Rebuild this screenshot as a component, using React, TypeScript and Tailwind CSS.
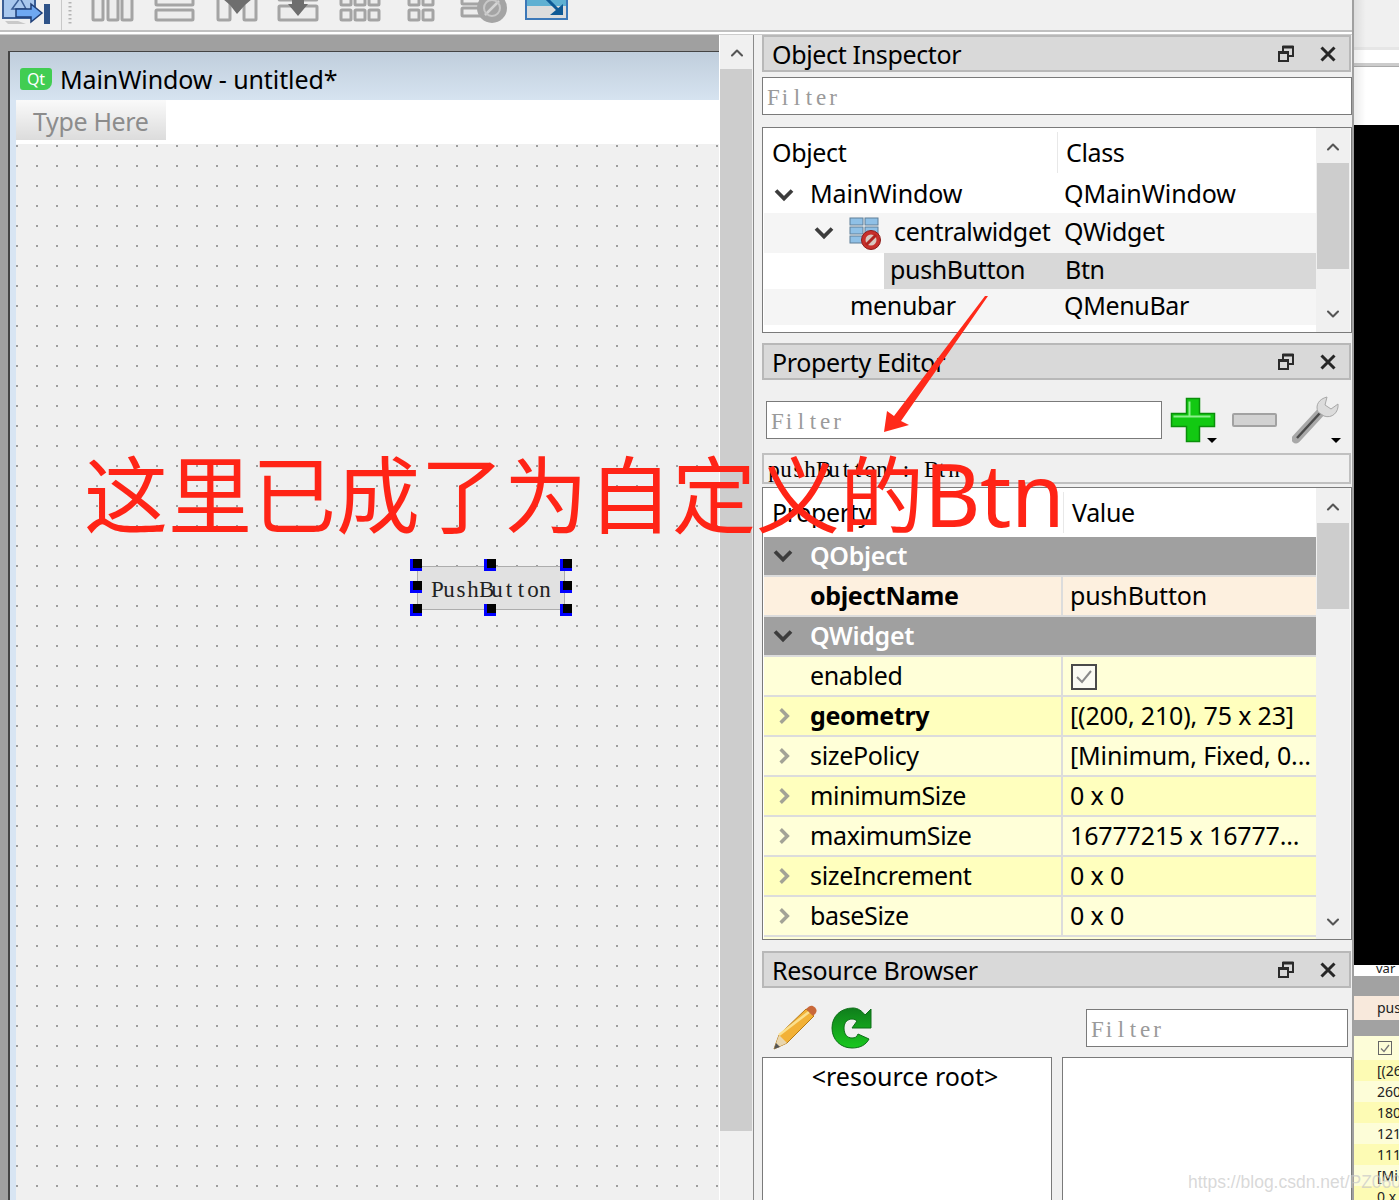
import { ChevronDown, ChevronUp } from "lucide-react";
import type { ReactNode } from "react";

const propertyRows = [
  { name: "enabled", value: "", bg: "bg-[#ffffd8]", check: true },
  { name: "geometry", value: "[(200, 210), 75 x 23]", bg: "bg-[#ffffbe]", bold: true, more: true },
  { name: "sizePolicy", value: "[Minimum, Fixed, 0...", bg: "bg-[#ffffd8]", more: true },
  { name: "minimumSize", value: "0 x 0", bg: "bg-[#ffffbe]", more: true },
  { name: "maximumSize", value: "16777215 x 16777...", bg: "bg-[#ffffd8]", more: true },
  { name: "sizeIncrement", value: "0 x 0", bg: "bg-[#ffffbe]", more: true },
  { name: "baseSize", value: "0 x 0", bg: "bg-[#ffffd8]", more: true },
];

const miniRows = [
  { text: "[(26", bg: "bg-[#fdfbb4]" },
  { text: "260", bg: "bg-[#fdfdd8]" },
  { text: "180", bg: "bg-[#fdfbb4]" },
  { text: "121", bg: "bg-[#fdfdd8]" },
  { text: "111", bg: "bg-[#fdfbb4]" },
  { text: "[Mi", bg: "bg-[#fdfdd8]" },
  { text: "0 x", bg: "bg-[#fdfbb4]" },
];

const handles = [
  "left-0 top-0",
  "left-[74px] top-0",
  "left-[150px] top-0",
  "left-0 top-[22px]",
  "left-[150px] top-[22px]",
  "left-0 top-[45px]",
  "left-[74px] top-[45px]",
  "left-[150px] top-[45px]",
];

// fixed 12px cells, the reference font is a bitmap serif with half width letters
const Fixed = ({ text }: { text: string }) => (
  <span className="whitespace-pre font-['Liberation_Serif',serif] tracking-normal">
    {[...text].map((ch, i) => (
      <span key={i} className="inline-block w-[12px] text-center">
        {ch}
      </span>
    ))}
  </span>
);

const FloatIcon = () => (
  <svg width="16" height="18" viewBox="0 0 16 18" fill="none" stroke="#2b2b2b" strokeWidth="2">
    <rect x="5" y="2" width="10" height="9" />
    <rect x="5" y="1" width="10" height="2" fill="#2b2b2b" strokeWidth="1" />
    <rect x="1" y="7" width="9" height="9" fill="#d9d9d9" />
    <rect x="1" y="6.5" width="9" height="2" fill="#2b2b2b" strokeWidth="1" />
  </svg>
);

const CloseIcon = () => (
  <svg width="16" height="16" viewBox="0 0 16 16" stroke="#262626" strokeWidth="3">
    <path d="M1.5 1.5 14.5 14.5M14.5 1.5 1.5 14.5" />
  </svg>
);

const TreeChevron = () => (
  <svg width="24" height="24" viewBox="0 0 24 24" fill="none" stroke="#3c3c3c" strokeWidth="3.8">
    <path d="M4 7.5l8 8 8-8" />
  </svg>
);

const MoreChevron = () => (
  <svg width="24" height="24" viewBox="0 0 24 24" fill="none" stroke="#a3a396" strokeWidth="4.2">
    <path d="M8 4l8 8-8 8" />
  </svg>
);

const DockTitle = ({ title }: { title: string }) => (
  <div className="flex h-[37px] w-[589px] shrink-0 items-center border-2 border-[#b8b8b8] bg-[#d9d9d9] pl-[8px] pr-[13px]">
    <span className="flex-1 pt-[2px] text-[25px] leading-none">{title}</span>
    <FloatIcon />
    <span className="ml-[26px] flex">
      <CloseIcon />
    </span>
  </div>
);

const FilterInput = ({ className }: { className: string }) => (
  <div
    className={`flex h-[38px] shrink-0 items-center border border-[#7a7a7a] bg-white pl-[4px] pt-[2px] text-[23px] text-[#9a9a9a] ${className}`}
  >
    <Fixed text="Filter" />
  </div>
);

const ScrollBar = ({ thumbTop, thumbHeight, bottomGap }: { thumbTop: number; thumbHeight: number; bottomGap: string }) => (
  <div className="flex h-full w-[34px] shrink-0 flex-col items-center bg-[#f0f0f0]">
    <div style={{ height: thumbTop }} className="flex w-full shrink-0 items-center justify-center pt-[3px]">
      <ChevronUp size={20} strokeWidth={2.5} color="#555" />
    </div>
    <div style={{ height: thumbHeight }} className="w-[32px] shrink-0 bg-[#cdcdcd]" />
    <div className={`flex w-full flex-1 items-end justify-center ${bottomGap}`}>
      <ChevronDown size={20} strokeWidth={2.5} color="#555" />
    </div>
  </div>
);

const TreeRow = ({
  object,
  klass,
  className,
  wide,
}: {
  object: ReactNode;
  klass: string;
  className: string;
  wide?: boolean;
}) => (
  <div className={`flex w-[552px] items-center ${className}`}>
    <div className="flex h-full w-[300px] items-center pb-[3px]">{object}</div>
    <span className={`pb-[3px] ${wide ? "tracking-[-0.1px]" : ""}`}>{klass}</span>
  </div>
);

const GroupRow = ({ title }: { title: string }) => (
  <div className="flex h-[38px] w-[552px] items-center bg-[#a0a0a0] pl-[7px] font-semibold text-white">
    <TreeChevron />
    <span className="ml-[15px] pb-[2px]">{title}</span>
  </div>
);

const PropertyRow = ({
  name,
  value,
  bg,
  bold,
  more,
  check,
}: {
  name: string;
  value: string;
  bg: string;
  bold?: boolean;
  more?: boolean;
  check?: boolean;
}) => (
  <div className={`flex h-[40px] w-[552px] shrink-0 border-b-[2px] border-[#dcdcdc] ${bg}`}>
    <div className="flex w-[299px] items-center border-r-[2px] border-[#dcdcdc] pl-[10px]">
      <span className="flex w-[20px] justify-center">{more && <MoreChevron />}</span>
      <span className={`ml-[16px] pb-[1px] ${bold ? "font-bold" : ""}`}>{name}</span>
    </div>
    <div className="flex items-center pl-[7px] tracking-[-0.15px]">
      {check ? (
        <span className="ml-[1px] mt-[2px] flex h-[26px] w-[26px] items-center justify-center border-2 border-[#4a4a4a] bg-[#fbfbf3]">
          <svg width="18" height="16" viewBox="0 0 18 16" fill="none" stroke="#8a8a8a" strokeWidth="2">
            <path d="M2 8 7 13 16 2" />
          </svg>
        </span>
      ) : (
        <span className="pb-[1px]">{value}</span>
      )}
    </div>
  </div>
);

const CentralWidgetIcon = () => (
  <svg width="34" height="34" viewBox="0 0 34 34">
    {[2, 11, 20].map((y) => (
      <g key={y}>
        <rect x="1" y={y} width="13" height="7" fill="#8fc0e6" stroke="#5f7f98" />
        <rect x="16" y={y} width="13" height="7" fill="#8fc0e6" stroke="#5f7f98" />
      </g>
    ))}
    <circle cx="22" cy="24" r="9.5" fill="#c8302c" stroke="#8c1d1a" />
    <circle cx="22" cy="24" r="5.5" fill="#d8c8c0" />
    <path d="M17 29 27 19" stroke="#b02420" strokeWidth="3" />
  </svg>
);

const PlusIcon = () => (
  <svg width="46" height="46" viewBox="0 0 46 46">
    <path
      d="M16.5 1.5h13v15h15v13h-15v15h-13v-15h-15v-13h15z"
      fill="#12c912"
      stroke="#0a8f0a"
      strokeWidth="1.5"
    />
    <path d="M19.5 4.5v14.5M3.5 19.5h37" fill="none" stroke="#8cf08c" strokeWidth="2" />
  </svg>
);

const MinusIcon = () => (
  <svg width="46" height="16" viewBox="0 0 46 16">
    <rect x="1" y="2" width="43" height="12" rx="1" fill="#d2d2d2" stroke="#a2a2a2" strokeWidth="2" />
  </svg>
);

const WrenchIcon = () => (
  <svg width="48" height="50" viewBox="0 0 48 50" fill="none">
    <path d="M4 44 28 18" stroke="#a8a8a8" strokeWidth="9" strokeLinecap="round" />
    <path d="M5 43 28 18" stroke="#4a4a4a" strokeWidth="2.5" />
    <path d="M26 17c-3-7 1-13 9-15l-2 8 6 4 7-5c1 8-6 15-14 12z" fill="#dcdcdc" stroke="#a8a8a8" />
  </svg>
);

const DropMark = () => <span className="h-0 w-0 border-x-[5px] border-t-[5px] border-x-transparent border-t-black" />;

const PencilIcon = () => (
  <svg width="46" height="46" viewBox="0 0 46 46">
    <path d="M2 44 7 30 34 4 42 11 15 38z" fill="#f2b136" stroke="#b57a16" />
    <path d="M7 30 37 7" stroke="#fbe08d" strokeWidth="2.5" />
    <path d="M34 4 37 1.5c2-1.5 4-1 6 1s2 4 .5 6L41 11z" fill="#c9683a" />
    <path d="M2 44 7 30 15 38z" fill="#e9d6ae" />
    <path d="M2 44 4 38 8 42z" fill="#555" />
  </svg>
);

const ReloadIcon = () => (
  <svg width="42" height="42" viewBox="0 0 42 42">
    <defs>
      <linearGradient id="reloadFill" x1="0" x2="0" y1="0" y2="1">
        <stop offset="0" stopColor="#0f7d1c" />
        <stop offset="1" stopColor="#19c81e" />
      </linearGradient>
    </defs>
    <path
      d="M22 1C10 1 1 9 1 21s9 20 20 20c8 0 14-3 17-9l-11-5c-1 3-3 4-6 4-5 0-8-4-8-10s4-9 8-9c2 0 4 1 5 2l-5 7h19V2l-6 6c-3-4-7-7-12-7z"
      fill="url(#reloadFill)"
      stroke="#0d6f17"
    />
  </svg>
);

const ToolbarIcons = () => (
  <div className="flex h-[30px] items-start overflow-hidden">
    <svg className="blur-[0.5px]" width="1352" height="30" viewBox="0 0 1352 30">
      {/* tab order */}
      <path d="M3 -2h32v20H3z" fill="#a9c8ee" stroke="#3c5f96" strokeWidth="2" />
      <path d="M12 9 20 -2l6 11z" fill="none" stroke="#3c5f96" strokeWidth="1.5" />
      <path d="M16 9h15V4l11 9-11 9v-5H16z" fill="#6ea8f2" stroke="#1f3f78" strokeWidth="1.5" />
      <rect x="44" y="4" width="6" height="20" fill="#2f5388" />
      <path d="M5 21h13l8 3H8z" fill="#c9c9c9" />
      <path d="M61.5 0v30" stroke="#c8c8c8" />
      <path d="M70 2v22" stroke="#b4b4b4" strokeWidth="3" strokeDasharray="1.5 2.5" />

      <g fill="#ededed" stroke="#a4a4a4" strokeWidth="3">
        {/* layout columns */}
        <rect x="93" y="-6" width="10" height="26" rx="1" />
        <rect x="108" y="-6" width="10" height="26" rx="1" />
        <rect x="122" y="-6" width="10" height="26" rx="1" />
        {/* layout rows */}
        <rect x="156" y="-6" width="37" height="11" rx="1" />
        <rect x="156" y="10" width="37" height="10" rx="1" />
        {/* splitter horizontal */}
        <rect x="218" y="-6" width="12" height="26" rx="1" />
        <rect x="244" y="-6" width="12" height="26" rx="1" />
        {/* splitter vertical */}
        <rect x="279" y="6" width="38" height="14" rx="1" />
        <rect x="279" y="-14" width="38" height="14" rx="1" />
        {/* grid */}
        {[341, 355, 369].map((x) => (
          <g key={x}>
            <rect x={x} y="-3" width="10" height="8" rx="1" />
            <rect x={x} y="10" width="10" height="10" rx="1" />
          </g>
        ))}
        {/* form */}
        {[409, 423].map((x) => (
          <g key={x}>
            <rect x={x} y="-3" width="10" height="8" rx="1" />
            <rect x={x} y="10" width="10" height="10" rx="1" />
          </g>
        ))}
        {/* break layout */}
        <rect x="462" y="-4" width="26" height="8" rx="1" />
        <rect x="462" y="8" width="26" height="8" rx="1" />
      </g>
      <path d="M223 -1h29l-7 6-8 9-7-9z" fill="#6e6e6e" />
      <path d="M292 -2h12v6h4l-10 12-10-12h4z" fill="#6e6e6e" />
      <circle cx="492" cy="8" r="15" fill="#a4a4a4" />
      <path d="M485 15 499 1" stroke="#d4d4d4" strokeWidth="2.5" />
      <circle cx="492" cy="8" r="8" fill="none" stroke="#c8c8c8" strokeWidth="2" />
      {/* adjust size */}
      <rect x="526" y="-4" width="41" height="23" fill="#dcdcdc" stroke="#3c78b8" strokeWidth="2" />
      <rect x="527" y="-3" width="39" height="9" fill="#5fb0d2" />
      <path d="M546 -2 560 12" stroke="#0f5a96" strokeWidth="3" />
      <path d="M550 15h13V4z" fill="#0f5a96" />
    </svg>
  </div>
);

const FormCanvas = () => (
  <div className="relative flex-1 bg-[#f0f0f0] bg-[conic-gradient(at_2px_2px,transparent_270deg,#9e9e9e_270deg)] bg-[size:20px_20px] bg-[position:0_1px]">
    {/* widget on the form, placed freely */}
    <div className="absolute left-[394px] top-[415px] h-[57px] w-[162px]">
      <div className="absolute left-[7px] top-[7px] flex h-[44px] w-[148px] items-center justify-center border border-[#adadad] bg-[#e1e1e1] pt-[2px] text-[23px] text-[#222]">
        <Fixed text="PushButton" />
      </div>
      {handles.map((pos) => (
        <div key={pos} className={`absolute flex h-[12px] w-[12px] justify-end bg-[#0000ff] ${pos}`}>
          <div className="h-[9px] w-[9px] bg-black" />
        </div>
      ))}
    </div>
  </div>
);

const DesignerArea = () => (
  <div className="flex h-[1165px] w-[753px] shrink-0">
    <div className="flex w-[719px] shrink-0 flex-col bg-[#a0a0a0] pl-[8px] pt-[16px]">
      <div className="flex flex-1 flex-col border-l-[2px] border-t-[1px] border-[#444] bg-[#d8e5f3]">
        <div className="flex h-[48px] shrink-0 items-center bg-gradient-to-b from-[#c0cedc] to-[#d6e3f0] pl-[10px] text-[25px] tracking-[-0.1px]">
          <span className="mt-[6px] flex h-[22px] w-[32px] items-center justify-center rounded-[3px] rounded-br-[8px] bg-[#41cd52] text-[16px] text-white">
            Qt
          </span>
          <span className="ml-[8px] pt-[6px] text-black">MainWindow - untitled*</span>
        </div>
        <div className="ml-[6px] flex flex-1 flex-col">
          <div className="flex h-[44px] shrink-0 items-start bg-white">
            <div className="flex h-[40px] w-[150px] items-center bg-gradient-to-b from-[#fafafa] to-[#dcdcdc] pl-[17px] pt-[2px] text-[#8c8c8c]">
              Type Here
            </div>
          </div>
          <FormCanvas />
        </div>
      </div>
    </div>
    <div className="flex w-[34px] shrink-0 flex-col items-center border-l border-white bg-[#f0f0f0]">
      <div className="flex h-[34px] w-full shrink-0 items-center justify-center pt-[2px]">
        <ChevronUp size={20} strokeWidth={2.5} color="#555" />
      </div>
      <div className="h-[1062px] w-[32px] self-start bg-[#cdcdcd]" />
    </div>
  </div>
);

const ObjectInspector = () => (
  <>
    <DockTitle title="Object Inspector" />
    <FilterInput className="mt-[5px] w-[590px]" />
    <div className="mt-[12px] flex h-[206px] w-[590px] shrink-0 border border-[#7a7a7a] bg-white pl-[1px]">
      <div className="flex w-[552px] shrink-0 flex-col">
        <div className="flex h-[49px] shrink-0 items-center">
          <span className="w-[294px] border-r border-[#e8e8e8] py-[8px] pl-[8px]">Object</span>
          <span className="pl-[8px]">Class</span>
        </div>
        <TreeRow
          object={
            <>
              <span className="ml-[8px] flex pt-[3px]">
                <TreeChevron />
              </span>
              <span className="ml-[14px] tracking-[-0.1px]">MainWindow</span>
            </>
          }
          klass="QMainWindow"
          className="h-[36px]"
          wide
        />
        <TreeRow
          object={
            <>
              <span className="ml-[48px] flex pt-[3px]">
                <TreeChevron />
              </span>
              <span className="ml-[13px] flex pt-[3px]">
                <CentralWidgetIcon />
              </span>
              <span className="ml-[11px]">centralwidget</span>
            </>
          }
          klass="QWidget"
          className="h-[40px] bg-[#f5f5f5]"
        />
        <div className="flex h-[36px] w-[552px] items-center">
          <div className="h-full w-[120px] shrink-0" />
          <div className="flex h-full flex-1 items-center bg-[#d8d8d8] pb-[3px] pl-[6px]">
            <span className="w-[175px]">pushButton</span>
            <span>Btn</span>
          </div>
        </div>
        <TreeRow object={<span className="ml-[86px]">menubar</span>} klass="QMenuBar" className="h-[36px] bg-[#f5f5f5]" />
      </div>
      <ScrollBar thumbTop={35} thumbHeight={106} bottomGap="pb-[8px]" />
    </div>
  </>
);

const PropertyEditor = () => (
  <>
    <DockTitle title="Property Editor" />
    <div className="mt-[21px] flex h-[38px] w-[590px] shrink-0 items-center pl-[4px]">
      <FilterInput className="w-[396px]" />
      <div className="ml-[8px] flex w-[46px] flex-col items-center">
        <PlusIcon />
      </div>
      <div className="-ml-[9px] flex h-[46px] w-[10px] items-end">
        <DropMark />
      </div>
      <div className="ml-[15px]">
        <MinusIcon />
      </div>
      <div className="ml-[14px]">
        <WrenchIcon />
      </div>
      <div className="-ml-[9px] flex h-[46px] w-[10px] items-end">
        <DropMark />
      </div>
    </div>
    <div className="mt-[14px] flex h-[31px] w-[589px] shrink-0 items-center border-2 border-[#c0c0c0] pl-[4px] pt-[2px] text-[23px]">
      <Fixed text="pushButton : Btn" />
    </div>
    <div className="mt-[3px] flex h-[453px] w-[590px] shrink-0 border border-[#7a7a7a] bg-white pl-[1px]">
      <div className="flex h-full w-[552px] shrink-0 flex-col overflow-hidden bg-[#ffffd8]">
        <div className="flex h-[49px] shrink-0 items-center bg-white">
          <span className="w-[300px] border-r border-[#e8e8e8] py-[8px] pl-[8px]">Property</span>
          <span className="pl-[8px]">Value</span>
        </div>
        <GroupRow title="QObject" />
        <div className="h-[2px] shrink-0 bg-[#dcdcdc]" />
        <PropertyRow name="objectName" value="pushButton" bg="bg-[#fdf0df]" bold />
        <GroupRow title="QWidget" />
        <div className="h-[2px] shrink-0 bg-[#dcdcdc]" />
        {propertyRows.map((row) => (
          <PropertyRow key={row.name} {...row} />
        ))}
      </div>
      <ScrollBar thumbTop={35} thumbHeight={86} bottomGap="pb-[7px]" />
    </div>
  </>
);

const ResourceBrowser = () => (
  <>
    <DockTitle title="Resource Browser" />
    <div className="mt-[17px] flex h-[46px] w-[590px] shrink-0 items-center pl-[10px]">
      <PencilIcon />
      <span className="ml-[13px] flex">
        <ReloadIcon />
      </span>
      <FilterInput className="ml-[213px] w-[262px]" />
    </div>
    <div className="mt-[6px] flex flex-1 gap-[10px]">
      <div className="flex h-[160px] w-[290px] justify-center border border-[#7a7a7a] bg-white pr-[4px] pt-[6px] tracking-normal">
        &lt;resource root&gt;
      </div>
      <div className="h-[160px] w-[290px] border border-[#7a7a7a] bg-white" />
    </div>
  </>
);

const BackWindow = () => (
  <div className="relative flex h-[1200px] w-[47px] shrink-0 flex-col overflow-hidden border-l-2 border-[#a0a0a0] text-[14px] tracking-normal text-[#222]">
    <div className="h-[47px] shrink-0 bg-[#f0f0f0]" />
    <div className="h-[3px] shrink-0 bg-[#e6e6e6]" />
    <div className="h-[13px] shrink-0 bg-white" />
    <div className="h-[4px] shrink-0 border-b border-[#aaaaaa] bg-[#cccccc]" />
    <div className="h-[58px] shrink-0 bg-white" />
    <div className="h-[840px] shrink-0 bg-black" />
    <div className="h-[11px] shrink-0 bg-white pl-[22px] text-[13px] leading-[6px]">var</div>
    <div className="h-[20px] shrink-0 bg-[#a2a2a2]" />
    <div className="flex h-[24px] shrink-0 items-center bg-[#f8e9dc] pl-[23px]">pus</div>
    <div className="h-[16px] shrink-0 bg-[#a2a2a2]" />
    <div className="flex h-[24px] shrink-0 items-center bg-[#fdfdd8] pl-[24px]">
      <span className="flex h-[14px] w-[14px] items-center justify-center border border-[#666]">
        <svg width="10" height="9" viewBox="0 0 10 9" fill="none" stroke="#777" strokeWidth="1.3">
          <path d="M1 4.5 4 7.5 9 1" />
        </svg>
      </span>
    </div>
    {miniRows.map((row) => (
      <div key={row.text} className={`flex h-[21px] shrink-0 items-center pl-[23px] ${row.bg}`}>
        {row.text}
      </div>
    ))}
    <div className="absolute left-0 top-0 h-[125px] w-[12px] bg-gradient-to-r from-[#00000014] to-transparent" />
  </div>
);

const Annotation = () => (
  <>
    <svg className="pointer-events-none absolute left-[870px] top-[290px]" width="130" height="150" viewBox="870 290 130 150">
      <polygon points="988,296 901,421 909,425 884,432 887,411 894,416 985,296" fill="#ff2a1a" />
    </svg>
    <div className="pointer-events-none absolute left-[84px] top-[436px] whitespace-nowrap font-['Noto_Sans','Noto_Sans_CJK_SC',sans-serif] text-[84px] leading-[114px] tracking-normal text-[#ff2416]">
      这里已成了为自定义的<span className="text-[87px] tracking-[-0.5px]">Btn</span>
    </div>
    <div className="pointer-events-none absolute left-[1188px] top-[1174px] whitespace-nowrap font-['Liberation_Sans',sans-serif] text-[17.5px] tracking-normal text-[#c8c8c8]/70">
      https://blog.csdn.net/PZ0605
    </div>
  </>
);

export default function App() {
  return (
    <div className="relative flex h-[1200px] w-[1399px] overflow-hidden bg-[#f0f0f0] font-['Noto_Sans',sans-serif] text-[25px] leading-none tracking-[-0.35px] text-black">
      <div className="flex w-[1352px] shrink-0 flex-col">
        <div className="h-[35px] shrink-0 border-b border-[#cccccc]">
          <ToolbarIcons />
          <div className="h-[2px] bg-[#c0c0c0]" />
          <div className="h-[2px] bg-white" />
        </div>
        <div className="flex flex-1">
          <DesignerArea />
          <div className="flex flex-1 flex-col border-l border-[#8a8a8a] pl-[8px]">
            <ObjectInspector />
            <div className="h-[10px] shrink-0" />
            <PropertyEditor />
            <div className="h-[11px] shrink-0" />
            <ResourceBrowser />
          </div>
        </div>
      </div>
      <BackWindow />
      <Annotation />
    </div>
  );
}
